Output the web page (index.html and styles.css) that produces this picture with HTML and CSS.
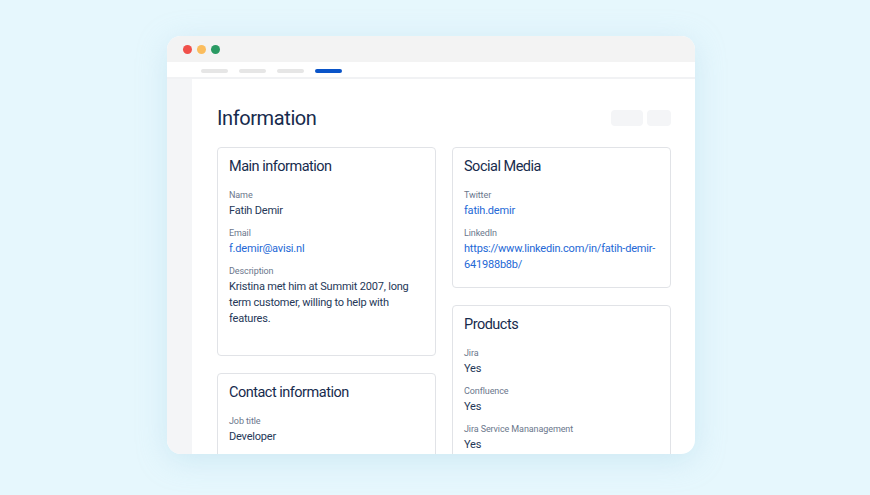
FILE: index.html
```html
<!DOCTYPE html>
<html lang="en">
<head>
<meta charset="utf-8">
<title>Information</title>
<link rel="stylesheet" href="styles.css">
</head>
<body>
<div class="window">
  <div class="titlebar">
    <span class="dot dot-red"></span>
    <span class="dot dot-yellow"></span>
    <span class="dot dot-green"></span>
  </div>
  <div class="tabs">
    <span class="tab"></span>
    <span class="tab"></span>
    <span class="tab"></span>
    <span class="tab tab-active"></span>
  </div>
  <div class="body">
    <aside class="sidebar"></aside>
    <main class="main">
      <div class="header">
        <h1 class="title">Information</h1>
        <div class="actions">
          <span class="btn btn-wide"></span>
          <span class="btn btn-narrow"></span>
        </div>
      </div>
      <div class="grid">
        <div class="column">
          <section class="card card-main">
            <h2 class="card-title">Main information</h2>
            <div class="field">
              <div class="label">Name</div>
              <div class="value">Fatih Demir</div>
            </div>
            <div class="field">
              <div class="label">Email</div>
              <div class="value link">f.demir@avisi.nl</div>
            </div>
            <div class="field">
              <div class="label">Description</div>
              <div class="value">Kristina met him at Summit 2007, long term customer, willing to help with features.</div>
            </div>
          </section>
          <section class="card">
            <h2 class="card-title">Contact information</h2>
            <div class="field">
              <div class="label">Job title</div>
              <div class="value">Developer</div>
            </div>
          </section>
        </div>
        <div class="column">
          <section class="card card-social">
            <h2 class="card-title">Social Media</h2>
            <div class="field">
              <div class="label">Twitter</div>
              <div class="value link">fatih.demir</div>
            </div>
            <div class="field">
              <div class="label">LinkedIn</div>
              <div class="value link">https://www.linkedin.com/in/fatih-demir-641988b8b/</div>
            </div>
          </section>
          <section class="card">
            <h2 class="card-title">Products</h2>
            <div class="field">
              <div class="label">Jira</div>
              <div class="value">Yes</div>
            </div>
            <div class="field">
              <div class="label">Confluence</div>
              <div class="value">Yes</div>
            </div>
            <div class="field">
              <div class="label">Jira Service Mananagement</div>
              <div class="value">Yes</div>
            </div>
          </section>
        </div>
      </div>
    </main>
  </div>
</div>
</body>
</html>
```

FILE: styles.css
```css
* { box-sizing: border-box; }

html, body {
  margin: 0;
  padding: 0;
}

body {
  width: 870px;
  height: 495px;
  overflow: hidden;
  background: #e6f7fd;
  font-family: Roboto, "Liberation Sans", sans-serif;
  display: flex;
  align-items: flex-start;
}

.window {
  margin: 36px 0 0 167px;
  width: 528px;
  height: 418px;
  border-radius: 14px;
  overflow: hidden;
  background: #ffffff;
  box-shadow: 0 6px 30px rgba(160, 205, 225, 0.35);
  display: flex;
  flex-direction: column;
}

.titlebar {
  height: 26px;
  flex: none;
  background: #f3f3f3;
  display: flex;
  align-items: center;
  gap: 5px;
  padding-left: 16px;
  padding-top: 1px;
}

.dot {
  width: 9px;
  height: 9px;
  border-radius: 50%;
}
.dot-red { background: #f0504a; }
.dot-yellow { background: #fbbd5e; }
.dot-green { background: #2a9a63; }

.tabs {
  height: 17px;
  flex: none;
  background: #ffffff;
  border-bottom: 2px solid #f1f2f4;
  display: flex;
  align-items: flex-start;
  gap: 11px;
  padding: 7px 0 0 34px;
}

.tab {
  width: 27px;
  height: 4px;
  border-radius: 2px;
  background: #e6e6e6;
}
.tab-active { background: #0a54c8; }

.body {
  flex: 1;
  display: flex;
  min-height: 0;
}

.sidebar {
  width: 25px;
  flex: none;
  background: #f4f5f7;
}

.main {
  flex: 1;
  padding: 27px 24px 0 25px;
  overflow: hidden;
}

.header {
  display: flex;
  align-items: center;
  justify-content: space-between;
  height: 24px;
}

.title {
  margin: 0;
  font-size: 20px;
  line-height: 24px;
  font-weight: 400;
  letter-spacing: -0.4px;
  color: #172b4d;
}

.actions {
  display: flex;
  gap: 4px;
}

.btn {
  height: 16px;
  border-radius: 4px;
  background: #f4f5f7;
}
.btn-wide { width: 32px; }
.btn-narrow { width: 24px; }

.grid {
  margin-top: 17px;
  display: grid;
  grid-template-columns: 219px 219px;
  column-gap: 16px;
  align-items: start;
}

.column {
  display: flex;
  flex-direction: column;
  gap: 17px;
}

.card {
  border: 1px solid #e1e3e7;
  border-radius: 4px;
  padding: 9px 11px 13px;
}

.card-main {
  min-height: 209px;
}

.card-social {
  padding-bottom: 14px;
}

.card-title {
  margin: 0 0 12px;
  font-size: 14.5px;
  line-height: 20px;
  font-weight: 400;
  letter-spacing: -0.5px;
  color: #172b4d;
}

.field + .field {
  margin-top: 8px;
}

.label {
  font-size: 9px;
  line-height: 12px;
  letter-spacing: -0.1px;
  color: #6b778c;
  margin-bottom: 2px;
}

.value {
  font-size: 11px;
  line-height: 16px;
  letter-spacing: -0.2px;
  color: #253858;
}

.link {
  color: #2468d6;
}
```
